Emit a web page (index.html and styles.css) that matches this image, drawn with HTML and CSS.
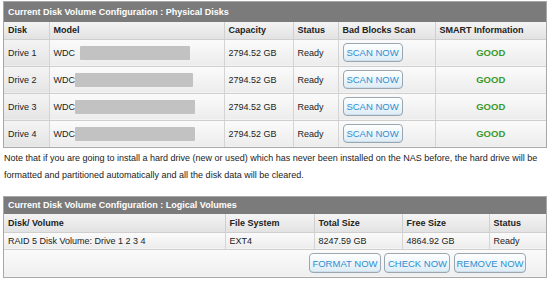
FILE: index.html
```html
<!DOCTYPE html>
<html lang="en">

<head>
  <meta charset="UTF-8">
  <title>Disk Volume Configuration</title>
  <link rel="stylesheet" href="styles.css">
</head>

<body>
  <div class="page">
    <div class="panel">
      <div class="panel-title">Current Disk Volume Configuration : Physical Disks</div>
      <table class="grid physical">
        <tr>
          <th class="c-disk">Disk</th>
          <th class="c-model">Model</th>
          <th class="c-cap">Capacity</th>
          <th class="c-status">Status</th>
          <th class="c-scan">Bad Blocks Scan</th>
          <th class="c-smart">SMART Information</th>
        </tr>
        <tr>
          <td class="c-disk">Drive 1</td>
          <td class="c-model"><div class="model">WDC<span class="redact r1"></span></div></td>
          <td>2794.52 GB</td>
          <td>Ready</td>
          <td><button class="btn">SCAN NOW</button></td>
          <td class="good">GOOD</td>
        </tr>
        <tr>
          <td class="c-disk">Drive 2</td>
          <td class="c-model"><div class="model">WDC<span class="redact r2"></span></div></td>
          <td>2794.52 GB</td>
          <td>Ready</td>
          <td><button class="btn">SCAN NOW</button></td>
          <td class="good">GOOD</td>
        </tr>
        <tr>
          <td class="c-disk">Drive 3</td>
          <td class="c-model"><div class="model">WDC<span class="redact r3"></span></div></td>
          <td>2794.52 GB</td>
          <td>Ready</td>
          <td><button class="btn">SCAN NOW</button></td>
          <td class="good">GOOD</td>
        </tr>
        <tr>
          <td class="c-disk">Drive 4</td>
          <td class="c-model"><div class="model">WDC<span class="redact r3"></span></div></td>
          <td>2794.52 GB</td>
          <td>Ready</td>
          <td><button class="btn">SCAN NOW</button></td>
          <td class="good">GOOD</td>
        </tr>
      </table>
    </div>

    <p class="note">Note that if you are going to install a hard drive (new or used) which has never been installed on the NAS before, the hard drive will be formatted and partitioned automatically and all the disk data will be cleared.</p>

    <div class="panel">
      <div class="panel-title small">Current Disk Volume Configuration : Logical Volumes</div>
      <table class="grid logical">
        <tr>
          <th class="c-vol">Disk/ Volume</th>
          <th class="c-fs">File System</th>
          <th class="c-total">Total Size</th>
          <th class="c-free">Free Size</th>
          <th class="c-vstatus">Status</th>
        </tr>
        <tr>
          <td>RAID 5 Disk Volume: Drive 1 2 3 4</td>
          <td>EXT4</td>
          <td>8247.59 GB</td>
          <td>4864.92 GB</td>
          <td>Ready</td>
        </tr>
        <tr class="actions">
          <td colspan="5">
            <button class="btn wide">FORMAT NOW</button>
            <button class="btn mid">CHECK NOW</button>
            <button class="btn wide">REMOVE NOW</button>
          </td>
        </tr>
      </table>
    </div>
  </div>
</body>

</html>
```

FILE: styles.css
```css
* {
  margin: 0;
  padding: 0;
  box-sizing: border-box;
}

body {
  background-color: #ffffff;
  font-family: 'Liberation Sans', Arial, sans-serif;
  font-size: 9px;
  color: #222;
}

.page {
  padding: 1px 3px 0 3px;
  width: 550px;
}

.panel {
  border: 1px solid #a8a8a8;
}

.panel-title {
  background-color: #7b7b7b;
  color: #fff;
  font-weight: 700;
  height: 20px;
  line-height: 20px;
  padding-left: 4px;
}

.panel-title.small {
  height: 17px;
  line-height: 17px;
}

.grid {
  width: 100%;
  border-collapse: collapse;
  table-layout: fixed;
}

.grid th {
  text-align: left;
  font-weight: 700;
  background: linear-gradient(#f4f4f4, #e2e2e2);
  border-left: 1px solid #cfcfcf;
  border-bottom: 1px solid #cfcfcf;
  padding: 0 4px;
  height: 18px;
}

.grid td {
  background: linear-gradient(#fbfbfb, #ececec);
  border-left: 1px solid #d4d4d4;
  border-bottom: 1px solid #cfcfcf;
  padding: 0 4px;
  white-space: nowrap;
}

.grid th:first-child,
.grid td:first-child {
  border-left: none;
}

.physical th {
  height: 17px;
}

.physical td {
  height: 27px;
}

.physical td.c-disk {
  background: linear-gradient(#f4f4f4, #e4e4e4);
}

.physical tr:last-child td {
  border-bottom: none;
}

.c-disk { width: 45px; }
.c-model { width: 175px; }
.c-cap { width: 69px; }
.c-status { width: 45px; }
.c-scan { width: 97px; }

.model {
  display: flex;
  align-items: center;
}

.redact {
  height: 14px;
  background-color: #c2c2c2;
  border-radius: 1px;
}

.r1 { width: 110px; margin-left: 5px; }
.r2 { width: 118px; }
.r3 { width: 120px; }

.good {
  text-align: center;
  color: #3c9a2c;
  font-weight: 700;
  font-size: 9.5px;
}

.btn {
  font-family: 'Liberation Sans', Arial, sans-serif;
  font-size: 9.5px;
  color: #2d8fd2;
  height: 19px;
  width: 60px;
  border: 1px solid #9aa7b0;
  border-radius: 4px;
  background: linear-gradient(#ffffff, #dcecf6);
  box-shadow: inset 0 -1px 0 #cfe0ec;
}

.wide {
  width: 72px;
}

.mid {
  width: 66px;
}

.c-vol { width: 221px; }
.c-fs { width: 89px; }
.c-total { width: 88px; }
.c-free { width: 87px; }

.logical td {
  height: 17px;
}

.logical .actions td {
  height: 28px;
  text-align: right;
  padding-right: 20px;
  background: linear-gradient(#fbfbfb, #eeeeee);
  border-bottom: none;
}

.actions .btn {
  margin-left: 1px;
  height: 20px;
}

.note {
  font-size: 9px;
  line-height: 17px;
  color: #222;
  padding: 2px 1px 0 1px;
  margin-bottom: 12px;
}
```
